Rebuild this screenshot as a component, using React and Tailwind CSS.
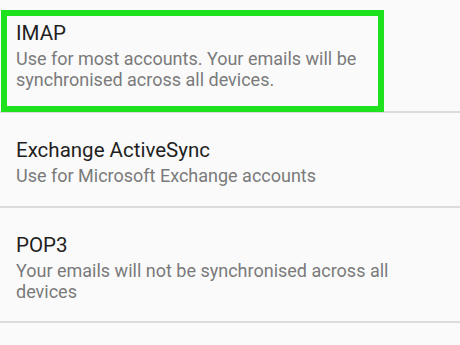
import React from "react";

const accounts = [
  {
    title: "IMAP",
    desc: "Use for most accounts. Your emails will be synchronised across all devices.",
    pad: "pt-[20px] pb-[21px]",
  },
  {
    title: "Exchange ActiveSync",
    desc: "Use for Microsoft Exchange accounts",
    pad: "pt-[24px] pb-[20px]",
  },
  {
    title: "POP3",
    desc: "Your emails will not be synchronised across all devices",
    pad: "pt-[24px] pb-[19px]",
  },
];

export default function App() {
  return (
    <div
      className="relative w-[460px] h-[345px] overflow-hidden bg-[#fafafa]"
      style={{ fontFamily: "Roboto, 'Noto Sans', sans-serif" }}
    >
      {accounts.map((a) => (
        <div
          key={a.title}
          className={`${a.pad} pl-[16px] pr-[60px] border-b-2 border-[#dcdcdc]`}
        >
          <div className="text-[20.5px] leading-[26px] text-[#1f1f1f]">{a.title}</div>
          <div className="mt-[2px] text-[18px] leading-[21px] text-[#7a7a7a]">
            {a.desc}
          </div>
        </div>
      ))}

      {/* highlight box */}
      <div className="absolute left-[1px] top-[10px] w-[383px] h-[102px] border-[6px] border-[#1de21d]" />
    </div>
  );
}
